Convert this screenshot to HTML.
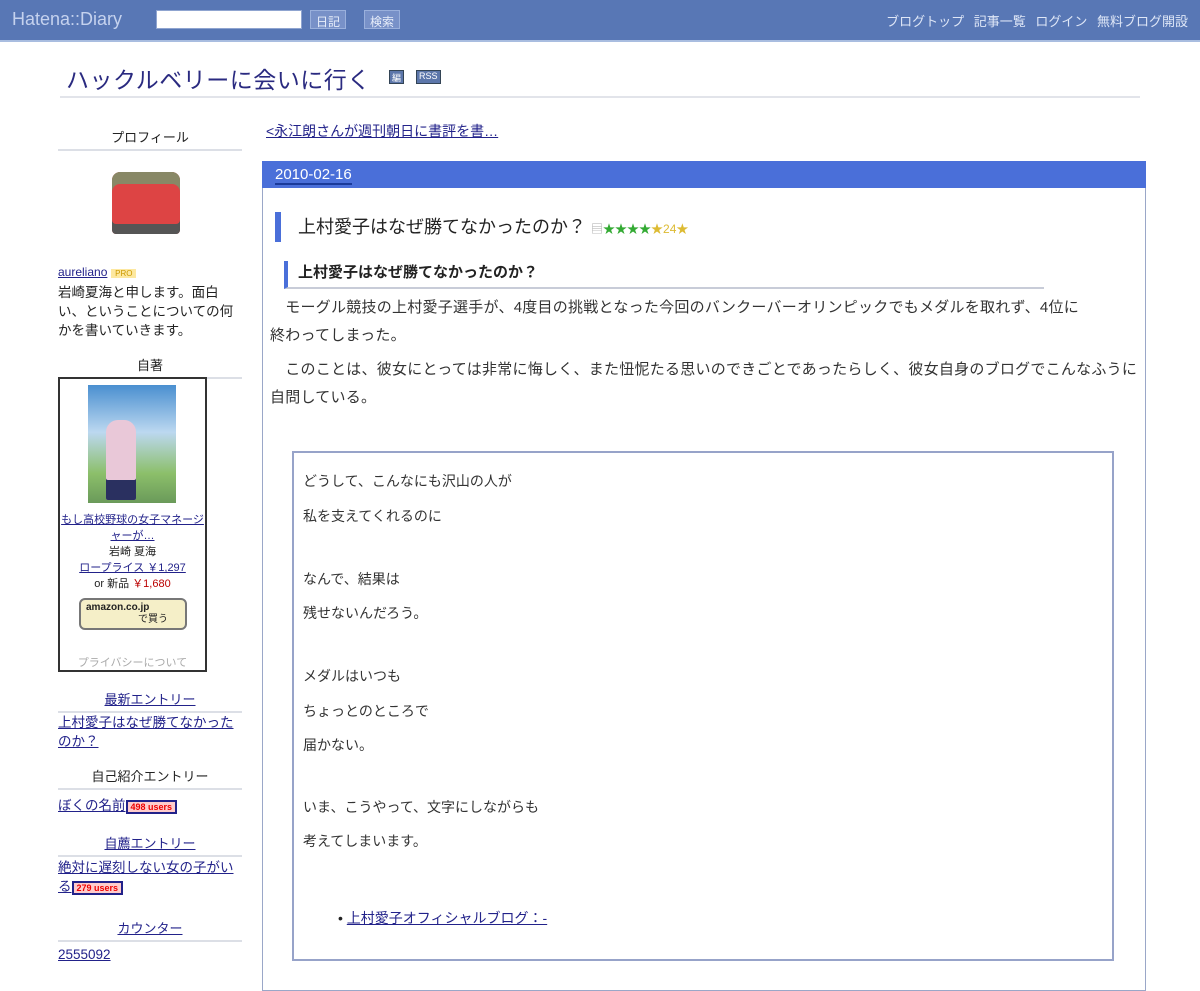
<!DOCTYPE html>
<html><head><meta charset="utf-8"><style>
*{margin:0;padding:0;box-sizing:border-box}
body{width:1200px;height:974px;overflow:hidden;background:#fff;font-family:"Liberation Sans","Noto Sans CJK JP",sans-serif;color:#222;position:relative}
a{color:#22228a}
.abs{position:absolute}
#hdr{left:0;top:0;width:1200px;height:42px;background:#5877b5;border-bottom:2px solid #a9bde0}
#hdr .logo{left:12px;top:9px;font-size:18px;color:#c5d2ee}
#hdr .in{left:156px;top:10px;width:146px;height:19px;background:#fff;border:1px solid #8fa4d0}
.btn{top:10px;height:19px;background:#7891c8;color:#e8eefa;font-size:12px;padding:2px 5px;border:1px solid #9ab0dc}
#nav{right:12px;top:11px;font-size:13px;color:#dfe7f7;word-spacing:6px}
#title{left:66px;top:61px;font-size:23px;color:#2a2a80;letter-spacing:0.5px}
.ico{top:70px;height:14px;background:#5c76aa;border:1px solid #345;font-size:9px;color:#fff;padding:0 2px}
#tline{left:60px;top:96px;width:1080px;height:2px;background:#e2e4ea}
.sh{left:58px;width:184px;text-align:center;font-size:13px;border-bottom:2px solid #dcdfe6;padding-bottom:3px}
.st{left:58px;width:186px;font-size:13.5px;line-height:19px}
#main{left:262px;top:161px;width:884px;height:830px;border:1px solid #9aa7c8}
#date{left:262px;top:161px;width:884px;height:27px;background:#4a6fd9;color:#fff;font-size:15px;padding:5px 13px}
#date span{border-bottom:2px solid #1a3a9a}
#h1{left:275px;top:212px;border-left:6px solid #4a6fd9;padding-left:17px;font-size:18px;height:30px;line-height:30px}
#h2{left:284px;top:261px;width:760px;border-left:4px solid #4a6fd9;border-bottom:2px solid #c8ccd8;padding-left:10px;font-size:15px;font-weight:bold;height:28px;line-height:24px}
.p{left:270px;width:868px;font-size:15px;line-height:28px;color:#333;letter-spacing:0.25px}
#bq{left:292px;top:451px;width:822px;height:510px;border:2px solid #97a3c9}
.q{left:303px;font-size:14px;color:#333}
</style></head><body>
<div id="hdr" class="abs">
<div class="abs logo">Hatena::Diary</div>
<div class="abs in"></div>
<div class="abs btn" style="left:310px">日記</div>
<div class="abs btn" style="left:364px">検索</div>
<div id="nav" class="abs">ブログトップ 記事一覧 ログイン 無料ブログ開設</div>
</div>
<div id="title" class="abs">ハックルベリーに会いに行く</div>
<div class="abs ico" style="left:389px">編</div>
<div class="abs ico" style="left:416px">RSS</div>
<div id="tline" class="abs"></div>

<div class="abs" style="left:266px;top:121px;font-size:14px"><a href="#">&lt;永江朗さんが週刊朝日に書評を書…</a></div>

<div class="abs sh" style="top:127px">プロフィール</div>
<div class="abs" style="left:112px;top:172px;width:68px;height:62px;background:#d44;border-radius:8px 8px 4px 4px;box-shadow:inset 0 -10px 0 #555, inset 0 12px 0 #886"></div>
<div class="abs st" style="top:262px"><a href="#" style="font-size:12px">aureliano</a> <span style="background:#fde8a0;font-size:8px;padding:0 4px;color:#c90">PRO</span><br>岩崎夏海と申します。面白い、ということについての何かを書いていきます。</div>
<div class="abs sh" style="top:355px">自著</div>
<div class="abs" style="left:58px;top:377px;width:149px;height:295px;border:2px solid #333"></div>
<div class="abs" style="left:88px;top:385px;width:88px;height:118px;background:linear-gradient(#4a8fd0,#bcd8f0 40%,#8cbf6a 75%,#6a9a5a)"></div>
<div class="abs" style="left:106px;top:420px;width:30px;height:80px;background:#e9c8d8;border-radius:12px 12px 2px 2px;box-shadow:inset 0 -20px 0 #2a3060"></div>
<div class="abs" style="left:60px;top:512px;width:145px;text-align:center;font-size:11px;line-height:16px">
<a href="#">もし高校野球の女子マネージャーが…</a><br>岩崎 夏海<br><a href="#">ロープライス ￥1,297</a><br>or 新品 <span style="color:#b00">￥1,680</span></div>
<div class="abs" style="left:79px;top:598px;width:108px;height:32px;border:2px solid #777;border-radius:6px;background:#f5efc8;font-size:10px;padding:2px 5px;font-weight:bold;line-height:12px">amazon.co.jp<br><span style="font-weight:normal;padding-left:52px">で買う</span></div>
<div class="abs" style="left:60px;top:654px;width:145px;text-align:center;font-size:11px;color:#aaa">プライバシーについて</div>

<div class="abs sh" style="top:689px"><a href="#">最新エントリー</a></div>
<div class="abs st" style="top:713px"><a href="#">上村愛子はなぜ勝てなかったのか？</a></div>
<div class="abs sh" style="top:766px">自己紹介エントリー</div>
<div class="abs st" style="top:796px"><a href="#">ぼくの名前</a><span style="border:2px solid #22228a;background:#fcc;color:#e00;font-size:9px;font-weight:bold;padding:0 3px">498 users</span></div>
<div class="abs sh" style="top:833px"><a href="#">自薦エントリー</a></div>
<div class="abs st" style="top:858px"><a href="#">絶対に遅刻しない女の子がいる</a><span style="border:2px solid #22228a;background:#fcc;color:#e00;font-size:9px;font-weight:bold;padding:0 3px">279 users</span></div>
<div class="abs sh" style="top:918px"><a href="#">カウンター</a></div>
<div class="abs st" style="top:945px"><a href="#">2555092</a></div>

<div id="main" class="abs"></div>
<div id="date" class="abs"><span>2010-02-16</span></div>
<div id="h1" class="abs">上村愛子はなぜ勝てなかったのか？ <span style="font-size:12px;color:#aaa">▤</span><span style="font-size:12px;color:#3a3">★★★★</span><span style="font-size:12px;color:#db3">★24★</span></div>
<div id="h2" class="abs">上村愛子はなぜ勝てなかったのか？</div>
<div class="abs p" style="top:294px;width:812px">　モーグル競技の上村愛子選手が、4度目の挑戦となった今回のバンクーバーオリンピックでもメダルを取れず、4位に終わってしまった。</div>
<div class="abs p" style="top:356px">　このことは、彼女にとっては非常に悔しく、また忸怩たる思いのできごとであったらしく、彼女自身のブログでこんなふうに自問している。</div>
<div id="bq" class="abs"></div>
<div class="abs q" style="top:471px">どうして、こんなにも沢山の人が</div>
<div class="abs q" style="top:506px">私を支えてくれるのに</div>
<div class="abs q" style="top:569px">なんで、結果は</div>
<div class="abs q" style="top:603px">残せないんだろう。</div>
<div class="abs q" style="top:666px">メダルはいつも</div>
<div class="abs q" style="top:701px">ちょっとのところで</div>
<div class="abs q" style="top:735px">届かない。</div>
<div class="abs q" style="top:797px">いま、こうやって、文字にしながらも</div>
<div class="abs q" style="top:831px">考えてしまいます。</div>
<div class="abs" style="left:338px;top:908px;font-size:14px">• <a href="#">上村愛子オフィシャルブログ：-</a></div>
</body></html>
